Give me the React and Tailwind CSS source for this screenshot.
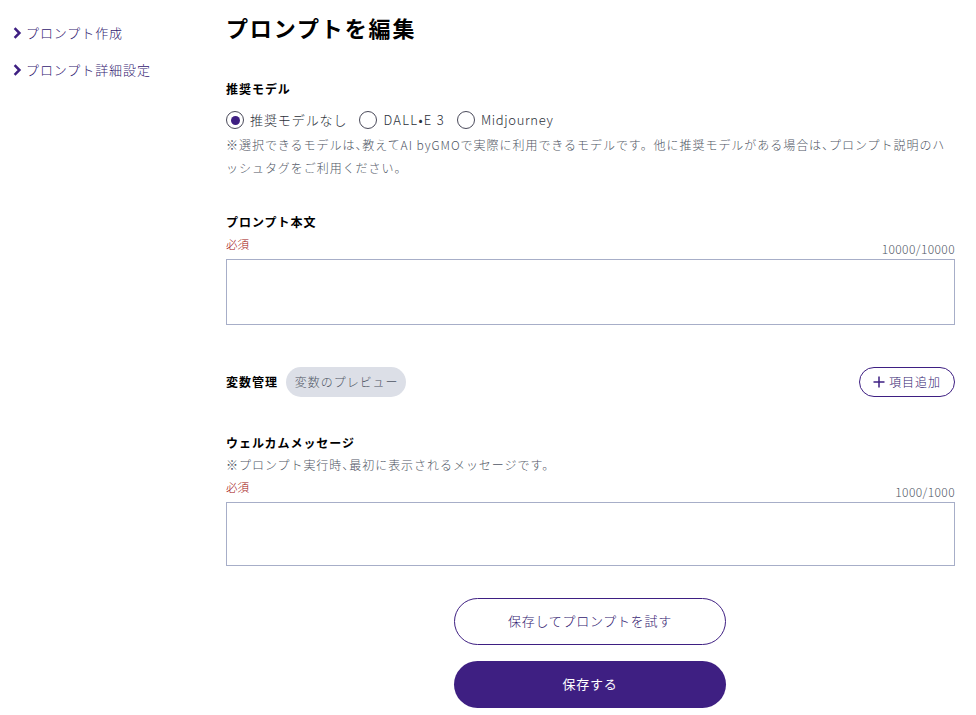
const F = { fontFamily: '"Noto Sans CJK JP", "Noto Sans", sans-serif' };
const Comma = () => <span className="inline-block [font-feature-settings:'halt']">、</span>;

function NavItem({ label }) {
  return (
    <a className="flex items-center gap-[4px] h-[20px] text-[13px] leading-[20px] tracking-[0.07em] font-light text-[#321870]">
      <svg width="9" height="12" viewBox="0 0 9 12" className="shrink-0">
        <path d="M1.6 1.2 L6.4 6 L1.6 10.8" fill="none" stroke="#3e1f82" strokeWidth="2.5" />
      </svg>
      {label}
    </a>
  );
}

function Radio({ label, checked, className }) {
  return (
    <label className="flex items-center gap-[6px] text-[13px] leading-[20px] font-light text-[#2b3038]">
      <span className="w-[18px] h-[18px] rounded-full border border-[#4a4a5a] flex items-center justify-center">
        {checked && <span className="w-[9px] h-[9px] rounded-full bg-[#3e1f82]" />}
      </span>
      <span className={className}>{label}</span>
    </label>
  );
}

function Field({ label, hint, count, taHeight }) {
  return (
    <div>
      <div className="text-[12px] leading-[18px] font-bold tracking-[0.08em] text-black">{label}</div>
      {hint && <div className="mt-[4px] text-[12px] leading-[18px] tracking-[0.08em] font-light text-[#4f5664]">{hint}</div>}
      <div className="flex justify-between items-end mt-[5px] h-[23px] pb-[2px]">
        <span className="text-[11.5px] leading-[16px] font-light text-[#a00a0a] self-start">必須</span>
        <span className="text-[12px] leading-[16px] font-light tracking-[0.4px] text-[#4f5664]">{count}</span>
      </div>
      <div className={`border border-[#a7aec8] ${taHeight}`} />
    </div>
  );
}

export default function App() {
  return (
    <div style={F} className="flex h-[715px] overflow-hidden bg-white">
      <nav className="w-[226px] shrink-0 pl-[13px] pt-[23px] flex flex-col gap-[17px]">
        <NavItem label="プロンプト作成" />
        <NavItem label="プロンプト詳細設定" />
      </nav>
      <main className="w-[729px] shrink-0 pt-[10px]">
        <h1 className="text-[22px] leading-[34px] font-bold tracking-[0.085em] text-black">プロンプトを編集</h1>
        <section className="mt-[36px]">
          <div className="text-[12px] leading-[18px] font-bold tracking-[0.08em] text-black">推奨モデル</div>
          <div className="flex gap-[12px] mt-[12px]">
            <Radio label="推奨モデルなし" checked className="tracking-[0.07em]" />
            <Radio label="DALL•E 3" className="tracking-[0.1em]" />
            <Radio label="Midjourney" className="tracking-[0.05em]" />
          </div>
          <p className="mt-[3px] text-[12px] leading-[23px] tracking-[0.08em] font-light text-[#4f5664]">
            ※選択できるモデルは<Comma />教えてAI byGMOで実際に利用できるモデルです。他に推奨モデルがある場合は<Comma />プロンプト説明のハッシュタグをご利用ください。
          </p>
        </section>
        <section className="mt-[34px]">
          <Field label="プロンプト本文" count="10000/10000" taHeight="h-[66px]" />
        </section>
        <section className="mt-[42px] flex items-center justify-between">
          <div className="flex items-center gap-[8px]">
            <span className="text-[12px] font-bold tracking-[0.08em] text-black">変数管理</span>
            <span className="h-[30px] pl-[9px] pr-[7px] rounded-full bg-[#dcdfe7] flex items-center text-[12px] font-light tracking-[0.08em] text-[#4f5664]">変数のプレビュー</span>
          </div>
          <button className="h-[30px] w-[96px] pb-[1px] rounded-full border border-[#3e1f82] flex items-center justify-center gap-[4px] text-[12px] font-light tracking-[0.08em] text-[#321870]">
            <svg width="12" height="12" viewBox="0 0 12 12"><path d="M6 0.5V11.5M0.5 6H11.5" stroke="#3e1f82" strokeWidth="1.5" /></svg>
            項目追加
          </button>
        </section>
        <section className="mt-[37px]">
          <Field label="ウェルカムメッセージ" hint={<>※プロンプト実行時<Comma />最初に表示されるメッセージです。</>} count="1000/1000" taHeight="h-[64px]" />
        </section>
        <div className="mt-[32px] pr-[1px] flex flex-col items-center gap-[16px]">
          <button className="w-[272px] h-[47px] pb-[2px] rounded-full border border-[#3e1f82] text-[13px] font-light tracking-[0.055em] text-[#321870]">保存してプロンプトを試す</button>
          <button className="w-[272px] h-[47px] pb-[2px] rounded-full bg-[#3e1f82] text-[13px] font-normal tracking-[0.055em] text-white">保存する</button>
        </div>
      </main>
    </div>
  );
}
